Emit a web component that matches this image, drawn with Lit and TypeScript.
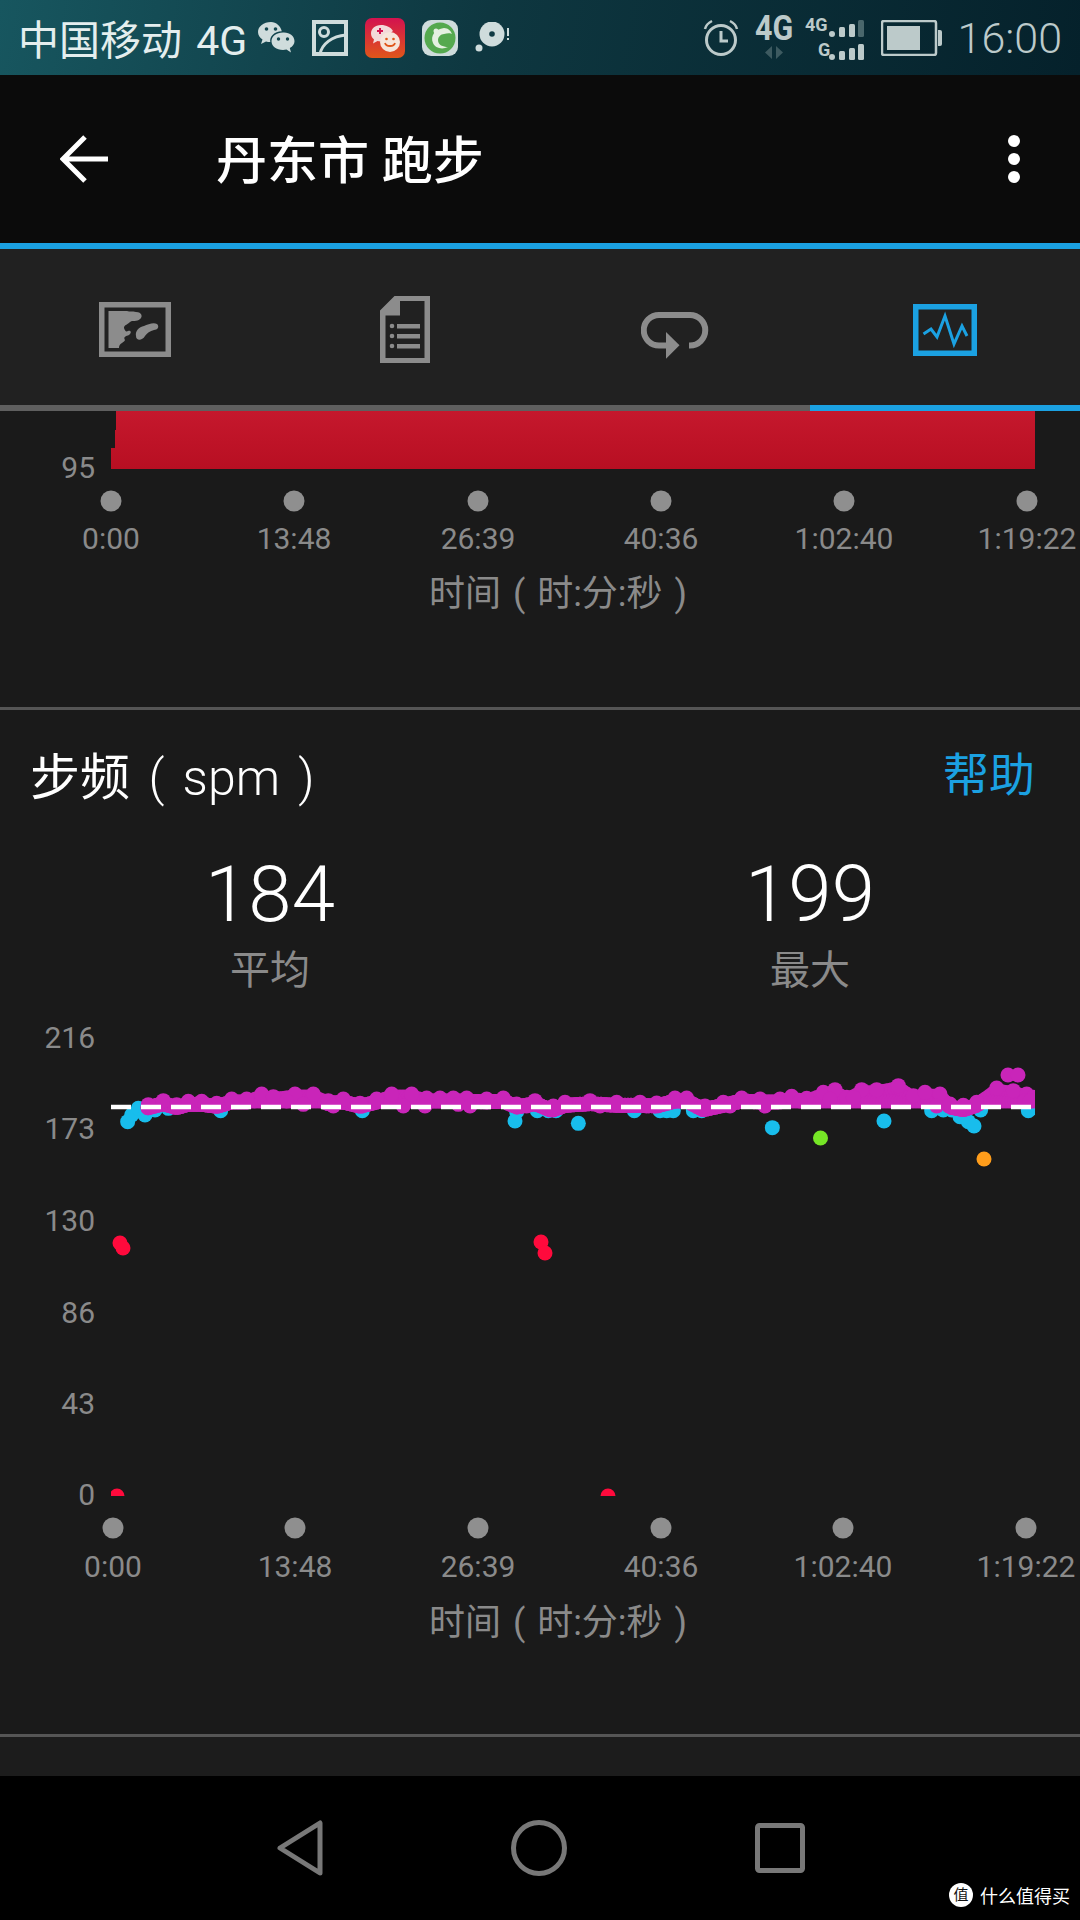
import { LitElement, css, html, svg } from 'lit'
import { customElement } from 'lit/decorators.js'

type Pt = [number, number]

// zoomed-in tops of the magenta band, three stretches of the chart
const fromCrop = (ox: number, pts: Pt[]): Pt[] =>
   pts.map(([x, top]) => [ox + x / 3, 1040 + (top + 22) / 3] as Pt)
const fromCropBottom = (ox: number, pts: Pt[]): Pt[] =>
   pts.map(([x, bot]) => [ox + x / 3, 1040 + (bot - 22) / 3] as Pt)
const fromCropCenter = (ox: number, pts: Pt[]): Pt[] =>
   pts.map(([x, y]) => [ox + x / 3, 1040 + y / 3] as Pt)

const peaks: Pt[] = [
   ...fromCrop(90, [[175, 172], [220, 160], [260, 172], [295, 162], [335, 162], [380, 168], [425, 155], [470, 155], [515, 140], [550, 148], [615, 140], [670, 140], [715, 160], [760, 155], [810, 168], [860, 155], [905, 140], [965, 140]]),
   ...fromCrop(420, [[20, 152], [60, 152], [100, 152], [140, 152], [200, 155], [250, 152], [290, 170], [345, 160], [395, 180], [435, 165], [510, 160], [590, 165], [660, 165], [710, 167], [765, 152], [800, 152], [850, 178], [910, 165], [965, 152]]),
   ...fromCrop(750, [[30, 155], [90, 155], [125, 147], [170, 153], [220, 135], [255, 127], [290, 150], [335, 127], [380, 127], [445, 115], [490, 145], [525, 135], [570, 140], [600, 170], [640, 178], [680, 165], [740, 122], [790, 130], [830, 140], [850, 150]]),
]

const lows: Pt[] = [
   ...fromCropBottom(90, [[345, 215], [590, 205], [640, 215], [730, 220], [940, 220]]),
   ...fromCropBottom(420, [[15, 220], [115, 215], [150, 220], [320, 220], [400, 220], [540, 220], [680, 220], [855, 220], [930, 220]]),
   ...fromCropBottom(750, [[45, 220], [150, 205], [240, 200], [310, 195], [560, 220], [640, 218], [825, 205], [840, 205]]),
   [1008, 1075], [1018, 1075],
]

const blue: Pt[] = [
   ...fromCropCenter(90, [[113, 245], [125, 225], [145, 205], [165, 225], [195, 210], [235, 205], [392, 212], [817, 212]]),
   ...fromCropCenter(420, [[285, 243], [290, 215], [352, 212], [385, 212], [408, 212], [475, 250], [643, 212], [720, 212], [740, 212], [760, 212], [820, 212], [845, 212]]),
   ...fromCropCenter(750, [[67, 263], [402, 243], [545, 212], [580, 210], [605, 210], [630, 230], [655, 245], [672, 258], [692, 210], [835, 212]]),
]

const red: Pt[] = [[120, 1243], [123, 1248], [541, 1242], [545, 1253], [117, 1496], [608, 1496]]

const bandAt = (x: number) => {
   for (let i = 1; i < peaks.length; i++) {
      if (x <= peaks[i][0]) {
         const [x0, y0] = peaks[i - 1]
         const [x1, y1] = peaks[i]
         return y0 + ((y1 - y0) * (x - x0)) / (x1 - x0)
      }
   }
   return peaks[peaks.length - 1][1]
}

// body of the band sits a bit under the peaks so they stay visible as bumps
const band: Pt[] = []
for (let x = 148; x <= 1034; x += 3) {
   const y = bandAt(x)
   band.push([x, y + 3])
   band.push([x, Math.max(y + 3, 1101)])
}

const ticksTop = [
   [111, '0:00'], [294, '13:48'], [478, '26:39'], [661, '40:36'], [844, '1:02:40'], [1027, '1:19:22'],
] as [number, string][]
const ticksBottom = [
   [113, '0:00'], [295, '13:48'], [478, '26:39'], [661, '40:36'], [843, '1:02:40'], [1026, '1:19:22'],
] as [number, string][]
const yLabels = [[1037, '216'], [1128, '173'], [1220, '130'], [1312, '86'], [1403, '43'], [1494, '0']] as [number, string][]

const dots = (pts: Pt[], cls: string, r = 7.5) =>
   pts.map(([x, y]) => svg`<circle class=${cls} cx=${x} cy=${y} r=${r}></circle>`)

const axis = (ticks: [number, string][], dotY: number, labelY: number, titleY: number) => svg`
   ${ticks.map(([x, t]) => svg`
      <circle class="tick" cx=${x} cy=${dotY} r="10.5"></circle>
      <text class="label" x=${Math.min(x, 1028)} y=${labelY} text-anchor="middle" dominant-baseline="central">${t}</text>
   `)}
   <text class="axis-title" x="558" y=${titleY} text-anchor="middle" dominant-baseline="central">时间 ( 时:分:秒 )</text>
`

@customElement('app-root')
export class AppRoot extends LitElement {
   static styles = css`
      :host {
         display: flex;
         flex-direction: column;
         width: 1080px;
         height: 1920px;
         overflow: hidden;
         position: relative;
         background: #1a1a1a;
         font-family: Roboto, "Noto Sans CJK SC", sans-serif;
      }
      svg { display: block; flex: none; }

      .status {
         height: 75px;
         flex: none;
         display: flex;
         align-items: center;
         padding: 0 18px;
         background: linear-gradient(100deg, #17565f 0%, #0e3740 45%, #05212b 100%);
         color: #e4eeee;
      }
      .carrier { font-size: 41px; word-spacing: 4px; white-space: nowrap; margin-right: 10px; padding-bottom: 2px; }
      .notes { display: flex; align-items: center; gap: 17px; }
      .sys { margin-left: auto; display: flex; align-items: center; gap: 16px; }
      .clock { font-size: 43px; font-weight: 300; color: #bccaca; }
      .big4g { width: 44px; margin-right: -10px; }
      .big4g span {
         display: block;
         font-size: 35px;
         font-weight: 700;
         line-height: 26px;
         color: #bccaca;
         transform: scaleX(0.87);
         transform-origin: left;
      }
      .big4g svg { margin-top: 4px; }

      .toolbar {
         height: 168px;
         flex: none;
         display: flex;
         align-items: center;
         background: #0b0b0b;
         border-bottom: 6px solid #1ba1e2;
         padding: 0 60px;
         color: #fff;
      }
      .title { font-size: 51px; font-weight: 500; margin-left: 108px; flex: 1; padding-bottom: 4px; }

      .tabs {
         height: 156px;
         flex: none;
         display: grid;
         grid-template-columns: repeat(4, 270px);
         align-items: center;
         justify-items: center;
         background: #212121;
      }
      .tabs svg { margin-top: 5px; }
      .tabs .loop { margin-top: 17px; }
      .indicator { height: 6px; flex: none; background: linear-gradient(90deg, #5f5f5f 810px, #1ba1e2 810px); }

      .content { flex: 1; display: flex; flex-direction: column; min-height: 0; }
      .divider { height: 3px; flex: none; background: #555; }
      .head {
         height: 135px;
         box-sizing: border-box;
         flex: none;
         display: flex;
         align-items: center;
         justify-content: space-between;
         padding: 0 45px 10px 30px;
      }
      .head h2 { margin: 0; font-size: 50px; font-weight: 400; word-spacing: 6px; color: #fff; }
      .head h2 span { font-weight: 300; }
      .help { font-size: 46px; color: #1ba1e2; margin-bottom: 3px; }
      .stats { display: grid; grid-template-columns: 1fr 1fr; flex: none; text-align: center; }
      .value { font-size: 78px; font-weight: 300; line-height: 100px; color: #fff; }
      .caption { font-size: 40px; line-height: 52px; color: #8a8a8a; }
      .tail { flex: 1; background: #1c1c1c; }

      .label { font-size: 30px; fill: #8a8a8a; }
      .ylabel { font-size: 30px; fill: #8a8a8a; }
      .axis-title { font-size: 36px; word-spacing: 3px; fill: #8a8a8a; }
      .tick { fill: #8f8f8f; }
      .mag { fill: #c925b9; }
      .blu { fill: #18bdec; }
      .red { fill: #ff0a3c; }
      .grn { fill: #76e626; }
      .org { fill: #ff9d1b; }
      .avg { stroke: #fff; stroke-width: 4.5; stroke-dasharray: 20 10; }

      .nav {
         height: 144px;
         flex: none;
         background: #000;
         display: flex;
         align-items: flex-start;
         padding: 44px 0 0 277px;
         box-sizing: border-box;
         gap: 188px;
      }
      .mark {
         position: absolute;
         right: 10px;
         bottom: 12px;
         display: flex;
         align-items: center;
         gap: 7px;
         color: #fff;
         font-size: 18px;
      }
      .mark i {
         width: 24px;
         height: 24px;
         border-radius: 50%;
         background: #fff;
         color: #111;
         font-style: normal;
         font-size: 15px;
         line-height: 24px;
         text-align: center;
      }
   `

   renderStatus() {
      return html`
         <div class="status">
            <span class="carrier">中国移动 4G</span>
            <div class="notes">
               <svg width="38" height="33" viewBox="0 0 38 33" fill="#cfdcdc">
                  <path d="M14 1C6.500 1 1 5.500 1 11c0 3.200 1.800 5.800 4.500 7.600L4 23l5-2.600c1.300.4 2.800.6 4.300.6-1-5.500 4-10.500 11.500-10.800C23.500 5 19.300 1 14 1z"/>
                  <path d="M26 11.500c-6.500 0-11.500 3.900-11.500 8.800S19.500 29 26 29c1.200 0 2.400-.2 3.500-.5l4.500 3-1.200-4.400c3-1.600 4.700-4 4.700-6.800 0-4.900-4.500-8.800-10.500-8.800z"/>
                  <circle cx="9.500" cy="8" r="1.800" fill="#14474f"/><circle cx="18.500" cy="8" r="1.800" fill="#14474f"/>
                  <circle cx="21.500" cy="18" r="1.700" fill="#14474f"/><circle cx="30.500" cy="18" r="1.700" fill="#14474f"/>
               </svg>
               <svg width="36" height="36" viewBox="0 0 36 36" fill="none" stroke="#cfdcdc" stroke-width="3">
                  <rect x="2" y="2" width="32" height="32" stroke-width="4"/>
                  <circle cx="12" cy="12" r="4.500"/>
                  <path d="M8 34C10 24 20 16 34 15"/>
               </svg>
               <svg width="40" height="40" viewBox="0 0 40 40">
                  <defs><linearGradient id="rd" x1="0" y1="0" x2="0" y2="1"><stop offset="0" stop-color="#d3124f"/><stop offset="1" stop-color="#e0561a"/></linearGradient></defs>
                  <rect width="40" height="40" rx="7" fill="url(#rd)"/>
                  <path d="M16 7c-6 0-10 4-10 8.500 0 2.500 1.300 4.500 3 6l-1 4 4.500-2.500c1 .3 2 .4 3 .4L28 13c-2-3.500-6.500-6-12-6z" fill="#f3d9d9"/>
                  <circle cx="25" cy="24" r="10" fill="#f6e5da"/>
                  <path d="M20 25c1 4 9 4 10 0" fill="none" stroke="#e0561a" stroke-width="1.800"/>
                  <circle cx="21.500" cy="21" r="1.300" fill="#e0561a"/><circle cx="28.500" cy="21" r="1.300" fill="#e0561a"/>
                  <path d="M15 10v6M12 13h6" stroke="#d3124f" stroke-width="2"/>
               </svg>
               <svg width="36" height="36" viewBox="0 0 36 36">
                  <rect width="36" height="36" rx="9" fill="#cfdcdc"/>
                  <circle cx="18" cy="18" r="15.500" fill="#55a94f"/>
                  <path d="M22 8C13 9 8 16 11 23c2 5 9 7 15 4-5 0-10-2-10-7 0-3 3-6 6-6 3-1 7-1 8 0-1-3-4-6-8-6z" fill="#e4f0e0"/>
                  <circle cx="14" cy="11" r="2.500" fill="#e4f0e0"/>
               </svg>
               <svg width="36" height="32" viewBox="0 0 36 32">
                  <circle cx="17" cy="12" r="12.500" fill="#cfdcdc"/><circle cx="17" cy="12" r="2.800" fill="#103a43"/>
                  <circle cx="4" cy="26" r="3.500" fill="#cfdcdc"/>
                  <path d="M33 6v8M33 16v2" stroke="#cfdcdc" stroke-width="2"/>
               </svg>
            </div>
            <div class="sys">
               <svg width="36" height="38" viewBox="0 0 36 38" fill="none" stroke="#bccaca" stroke-width="3">
                  <circle cx="18" cy="21" r="14.500"/>
                  <path d="M18 12v10h7"/>
                  <path d="M2 10C3 6 6 3.500 9 2M34 10c-1-4-4-6.500-7-8" stroke-width="2.500"/>
               </svg>
               <div class="big4g">
                  <span>4G</span>
                  <svg width="44" height="13" viewBox="0 0 44 13"><path d="M17 0v13l-7-6.500zM21 0v13l7-6.500z" fill="#3d5a60"/></svg>
               </div>
               <svg width="60" height="46" viewBox="0 0 60 46">
                  <text x="0" y="16" font-size="18" font-weight="700" fill="#bccaca">4G</text>
                  <text x="13" y="41" font-size="18" font-weight="700" fill="#bccaca">G</text>
                  <g fill="#bccaca">
                     <rect x="24" y="16" width="6" height="6" rx="3"/><rect x="34" y="12" width="6" height="10" rx="1.500"/><rect x="44" y="9" width="6" height="13" rx="1.500"/>
                     <rect x="24" y="39" width="6" height="6" rx="3"/><rect x="34" y="36" width="6" height="9" rx="1.500"/><rect x="44" y="33" width="6" height="12" rx="1.500"/><rect x="53" y="29" width="6" height="16" rx="1.500"/>
                  </g>
                  <rect x="53" y="5" width="6" height="17" rx="1.500" fill="#4a676c"/>
               </svg>
               <svg width="61" height="36" viewBox="0 0 61 36">
                  <rect x="1" y="1" width="54" height="34" rx="2" fill="none" stroke="#bccaca" stroke-width="2.500"/>
                  <rect x="6" y="6" width="33" height="24" fill="#bccaca"/>
                  <path d="M57 10h2a2 2 0 0 1 2 2v12a2 2 0 0 1-2 2h-2z" fill="#bccaca"/>
               </svg>
               <span class="clock">16:00</span>
            </div>
         </div>
      `
   }

   renderTabs() {
      return html`
         <div class="tabs">
            <svg width="72" height="55" viewBox="0 0 72 55">
               <rect x="2.750" y="2.750" width="66.500" height="49.500" fill="none" stroke="#8c8c8c" stroke-width="5.500"/>
               <path fill="#8c8c8c" d="M9.500 9H28C31 10 33 9 37 10C43 10 44 15 41 17C38 20 33 18 31 20C28 23 25 23 25 26C26 29 27 30 29 29C32 28 33 31 30 33C27 34 24 35 26 38C25 41 20 41 20 46H9.500Z"/>
               <path fill="#8c8c8c" d="M37 34C36 29 40 25 45 24C49 22 55 20 58 22C61 25 58 28 55 28C51 29 48 31 46 34C43 39 37 39 37 34Z"/>
            </svg>
            <svg width="50" height="67" viewBox="0 0 50 67" fill="#8c8c8c">
               <path fill-rule="evenodd" d="M14.500 0H50V67H0V14.500ZM20 5V19.500H5.500V62H44.500V5Z"/>
               <circle cx="12" cy="30" r="2.300"/><circle cx="12" cy="40" r="2.300"/><circle cx="12" cy="50" r="2.300"/>
               <rect x="17" y="28" width="23" height="4.500"/><rect x="17" y="38" width="23" height="4.500"/><rect x="17" y="48" width="23" height="4.500"/>
            </svg>
            <svg class="loop" width="68" height="47" viewBox="0 0 68 47">
               <path d="M26 33.500H18A15.250 15.250 0 0 1 18 3H49A15.250 15.250 0 0 1 49 33.500H48" fill="none" stroke="#8c8c8c" stroke-width="6"/>
               <path d="M25 20L38.500 33.300L25 46.700Z" fill="#8c8c8c"/>
            </svg>
            <svg width="64" height="52" viewBox="0 0 64 52">
               <rect x="2.750" y="2.750" width="58.500" height="46.500" fill="none" stroke="#1ba1e2" stroke-width="5.500"/>
               <path d="M10.500 30L18 25L24 33L32 12L41 40L49 22L54 32" fill="none" stroke="#1ba1e2" stroke-width="3"/>
            </svg>
         </div>
         <div class="indicator"></div>
      `
   }

   renderTopChart() {
      return svg`
         <svg width="1080" height="296" viewBox="0 411 1080 296">
            <defs><linearGradient id="hr" x1="0" y1="0" x2="0" y2="1"><stop offset="0" stop-color="#c5182d"/><stop offset="1" stop-color="#b80f22"/></linearGradient></defs>
            <path fill="url(#hr)" d="M116 411H1035V469H111V448H115V430H116Z"/>
            <text class="ylabel" x="95" y="467" text-anchor="end" dominant-baseline="central">95</text>
            ${axis(ticksTop, 501, 538, 594)}
         </svg>
      `
   }

   renderCadenceChart() {
      return svg`
         <svg width="1080" height="737" viewBox="0 997 1080 737">
            <defs><clipPath id="plot"><rect x="111" y="1000" width="924" height="496"></rect></clipPath></defs>
            ${yLabels.map(([y, t]) => svg`<text class="ylabel" x="95" y=${y} text-anchor="end" dominant-baseline="central">${t}</text>`)}
            <g clip-path="url(#plot)">
               ${dots(red, 'red')}
               ${dots(blue, 'blu')}
               ${dots(band, 'mag')}
               ${dots(peaks, 'mag')}
               ${dots(lows, 'mag')}
               <circle class="grn" cx="820.500" cy="1138" r="7.500"></circle>
               <circle class="org" cx="984" cy="1159" r="7.500"></circle>
            </g>
            <line class="avg" x1="111" x2="1031" y1="1107" y2="1107"></line>
            ${axis(ticksBottom, 1528, 1566, 1623)}
         </svg>
      `
   }

   render() {
      return html`
         ${this.renderStatus()}
         <div class="toolbar">
            <svg width="48" height="48" viewBox="0 0 48 48" fill="none" stroke="#fff" stroke-width="5">
               <path d="M48 24H4M25 2L3 24L25 46"/>
            </svg>
            <span class="title">丹东市 跑步</span>
            <svg width="12" height="48" viewBox="0 0 12 48" fill="#fff">
               <circle cx="6" cy="6" r="6"/><circle cx="6" cy="24" r="6"/><circle cx="6" cy="42" r="6"/>
            </svg>
         </div>
         ${this.renderTabs()}
         <div class="content">
            ${this.renderTopChart()}
            <div class="divider"></div>
            <div class="head"><h2>步频 <span>( spm )</span></h2><span class="help">帮助</span></div>
            <div class="stats">
               <div><div class="value">184</div><div class="caption">平均</div></div>
               <div><div class="value">199</div><div class="caption">最大</div></div>
            </div>
            ${this.renderCadenceChart()}
            <div class="divider"></div>
            <div class="tail"></div>
         </div>
         <div class="nav">
            <svg width="46" height="56" viewBox="0 0 46 56" fill="none" stroke="#787878" stroke-width="5" stroke-linejoin="round">
               <path d="M43 3V53L3 28Z"/>
            </svg>
            <svg width="56" height="56" viewBox="0 0 56 56" fill="none" stroke="#787878" stroke-width="5">
               <circle cx="28" cy="28" r="25.500"/>
            </svg>
            <svg width="50" height="50" viewBox="0 0 50 50" fill="none" stroke="#787878" stroke-width="5" style="margin-top:3px">
               <rect x="2.500" y="2.500" width="45" height="45" rx="2"/>
            </svg>
         </div>
         <div class="mark"><i>值</i><span>什么值得买</span></div>
      `
   }
}
